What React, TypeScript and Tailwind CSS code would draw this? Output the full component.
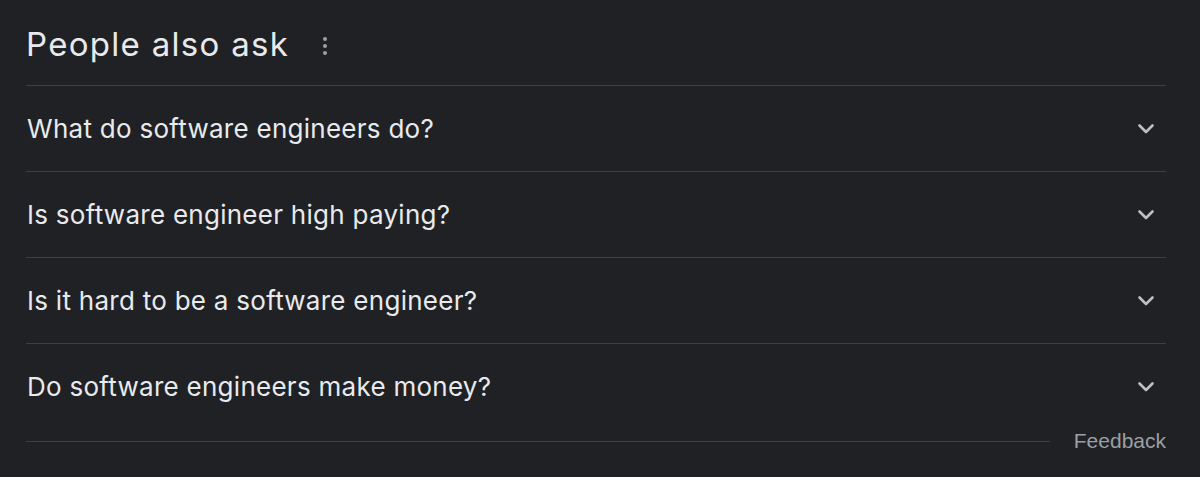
import React from "react";

const questions = [
  "What do software engineers do?",
  "Is software engineer high paying?",
  "Is it hard to be a software engineer?",
  "Do software engineers make money?",
];

function Chevron() {
  return (
    <svg width="24" height="24" viewBox="0 0 24 24" className="shrink-0">
      <path d="M5.5 8.5 L12 15 L18.5 8.5" fill="none" stroke="#bdc1c6" strokeWidth="2.6" strokeLinecap="round" strokeLinejoin="round" />
    </svg>
  );
}

export default function App() {
  return (
    <div className="w-[1200px] h-[477px] bg-[#202124] overflow-hidden" style={{ fontFamily: "Inter, Roboto, sans-serif" }}>
      <div className="ml-[26px] w-[1140px]">
        <div className="h-[85px] flex items-center pt-[4px]">
          <span className="text-[33px] tracking-[1.3px] text-[#e8eaed]">People also ask</span>
          <div className="ml-[34px] flex flex-col gap-[3px] mt-[2px]">
            <span className="w-[4px] h-[4px] rounded-full bg-[#9aa0a6]" />
            <span className="w-[4px] h-[4px] rounded-full bg-[#9aa0a6]" />
            <span className="w-[4px] h-[4px] rounded-full bg-[#9aa0a6]" />
          </div>
        </div>
        {questions.map((q) => (
          <div key={q} className="h-[86px] border-t-[1.5px] border-[#3c4043] flex items-center justify-between pl-[1px] pr-[8px]">
            <span className="text-[26px] tracking-[0.27px] text-[#e8eaed]">{q}</span>
            <Chevron />
          </div>
        ))}
        <div className="flex items-center h-[26px] mt-[-1px]">
          <div className="flex-1 h-[1.5px] bg-[#3c4043] mt-[1px]" />
          <span className="ml-[24px] text-[21px] text-[#9aa0a6]" style={{ fontFamily: "'Liberation Sans', Arial, sans-serif" }}>Feedback</span>
        </div>
      </div>
    </div>
  );
}
